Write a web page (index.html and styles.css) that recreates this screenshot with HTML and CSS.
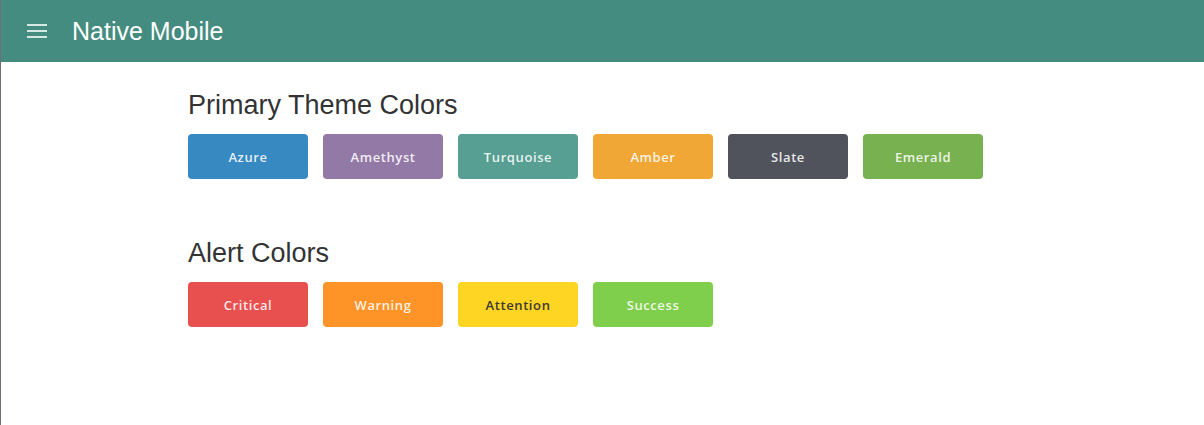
FILE: index.html
```html
<!DOCTYPE html>
<html lang="en">
    <head>
        <meta charset="UTF-8" />
        <meta name="viewport" content="width=device-width, initial-scale=1.0" />
        <title>Native Mobile</title>

        <link rel="stylesheet" href="styles.css">
    </head>
    <body>
        <header class="top_bar">
            <button class="menu_btn" aria-label="Menu">
                <svg width="20" height="14" viewBox="0 0 20 14">
                    <rect x="0" y="0" width="20" height="2" fill="currentColor" />
                    <rect x="0" y="6" width="20" height="2" fill="currentColor" />
                    <rect x="0" y="12" width="20" height="2" fill="currentColor" />
                </svg>
            </button>
            <h1 class="app_title">Native Mobile</h1>
        </header>

        <main class="content">
            <section class="palette">
                <h2>Primary Theme Colors</h2>
                <div class="swatches">
                    <button class="swatch azure">Azure</button>
                    <button class="swatch amethyst">Amethyst</button>
                    <button class="swatch turquoise">Turquoise</button>
                    <button class="swatch amber">Amber</button>
                    <button class="swatch slate">Slate</button>
                    <button class="swatch emerald">Emerald</button>
                </div>
            </section>

            <section class="palette">
                <h2>Alert Colors</h2>
                <div class="swatches">
                    <button class="swatch critical">Critical</button>
                    <button class="swatch warning">Warning</button>
                    <button class="swatch attention">Attention</button>
                    <button class="swatch success">Success</button>
                </div>
            </section>
        </main>
    </body>
</html>
```

FILE: styles.css
```css
html,
body {
    height: 100%;
}

body {
    margin: 0;
    border-left: 1px solid #6c6f7c;
    background-color: #ffffff;
    font-family: "Liberation Sans", Arial, sans-serif;
}

.top_bar {
    height: 62px;
    background-color: #448c7f;
    display: flex;
    align-items: center;
    padding-left: 26px;
}

.menu_btn {
    background: none;
    border: none;
    padding: 0;
    color: #d6e8e4;
    width: 20px;
    height: 14px;
    display: flex;
    margin-right: 25px;
    cursor: pointer;
}

.app_title {
    margin: 0;
    color: #ffffff;
    font-size: 25px;
    font-weight: normal;
}

.content {
    padding: 28px 0 0 187px;
}

.palette {
    margin-bottom: 59px;
}

.palette h2 {
    margin: 0 0 14px;
    font-size: 27px;
    line-height: 30px;
    font-weight: normal;
    color: #333333;
}

.swatches {
    display: flex;
    gap: 15px;
}

.swatch {
    width: 120px;
    height: 45px;
    border: none;
    border-radius: 4px;
    font-family: "Open Sans", sans-serif;
    font-size: 13px;
    font-weight: 600;
    letter-spacing: 0.6px;
    color: rgba(255, 255, 255, 0.88);
    cursor: pointer;
}

.azure { background-color: #3789c1; }
.amethyst { background-color: #9379a6; }
.turquoise { background-color: #569f92; }
.amber { background-color: #f0a736; }
.slate { background-color: #50535b; }
.emerald { background-color: #78b14f; }

.critical { background-color: #e85050; }
.warning { background-color: #fe9428; }
.attention { background-color: #ffd524; color: #3b3a30; }
.success { background-color: #80cf4c; }
```
